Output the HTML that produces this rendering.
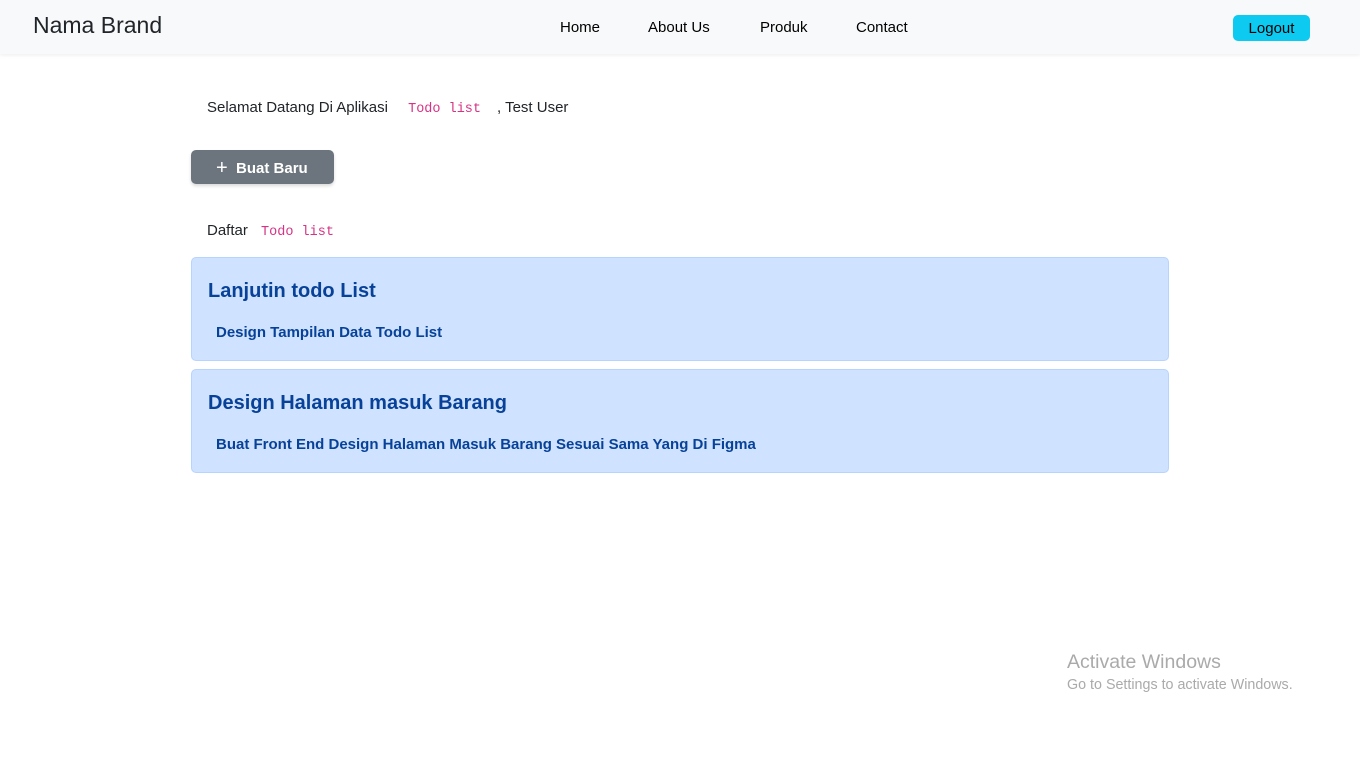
<!DOCTYPE html>
<html><head><meta charset="utf-8"><style>
*{box-sizing:border-box;margin:0;padding:0}
body{width:1360px;height:768px;background:#fff;font-family:"Liberation Sans",sans-serif;color:#212529;position:relative;overflow:hidden}
nav{position:absolute;top:0;left:0;width:1360px;height:54px;background:#f8f9fa;box-shadow:0 1px 4px rgba(0,0,0,.08)}
.brand{position:absolute;left:33px;top:12px;font-size:23px}
.nav a{position:absolute;top:19px;font-size:15px;color:#000}
.logout{position:absolute;left:1233px;top:15px;width:77px;height:26px;background:#0dcaf0;border-radius:5px;font-size:15px;text-align:center;line-height:27px;color:#000}
code{font-family:"Liberation Mono",monospace;color:#d63384;font-size:13.5px}
.t{position:absolute;font-size:15px}
.btn{position:absolute;left:191px;top:150px;width:143px;height:34px;background:#6c757d;border-radius:5px;color:#fff;font-weight:bold;font-size:15px;line-height:35px;padding-left:25px;box-shadow:0 2px 3px rgba(0,0,0,.15)}
.card{position:absolute;left:191px;width:978px;height:104px;background:#cfe2ff;border:1px solid #b6d4fe;border-radius:5px;color:#084298;font-weight:bold}
.card h3{position:absolute;left:16px;top:22px;font-size:20px}
.card p{position:absolute;left:24px;top:66px;font-size:15px}
.wm{position:absolute;left:1067px;color:#aaa}
</style></head><body>
<nav><div class="brand">Nama Brand</div>
<div class="nav"><a style="left:560px">Home</a><a style="left:648px">About Us</a><a style="left:760px">Produk</a><a style="left:856px">Contact</a></div>
<div class="logout">Logout</div></nav>
<div class="t" style="left:207px;top:99px">Selamat Datang Di Aplikasi <code style="margin-left:16px;margin-right:16px">Todo list</code>, Test User</div>
<div class="btn"><span style="font-size:20px;font-weight:normal;position:relative;top:1px">+</span>&nbsp; Buat Baru</div>
<div class="t" style="left:207px;top:222px">Daftar <code style="margin-left:9px">Todo list</code></div>
<div class="card" style="top:257px"><h3>Lanjutin todo List</h3><p>Design Tampilan Data Todo List</p></div>
<div class="card" style="top:369px"><h3>Design Halaman masuk Barang</h3><p>Buat Front End Design Halaman Masuk Barang Sesuai Sama Yang Di Figma</p></div>
<div class="wm" style="top:651px;font-size:19.5px">Activate Windows</div>
<div class="wm" style="top:677px;font-size:14.3px">Go to Settings to activate Windows.</div>
</body></html>
